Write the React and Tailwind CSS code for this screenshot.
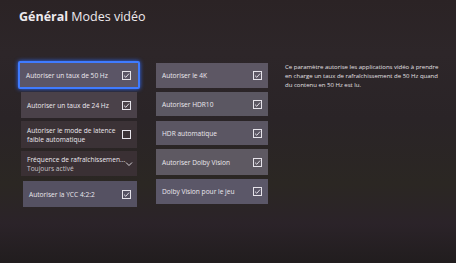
import React from "react";

const Check = ({ checked = true }) => (
  <div className="w-[9px] h-[9px] border border-[#e6e3ea] flex items-center justify-center shrink-0">
    {checked && (
      <svg width="7" height="7" viewBox="0 0 7 7" fill="none">
        <path d="M1 3.6 L2.8 5.3 L6 1.6" stroke="#ece9f0" strokeWidth="0.9" />
      </svg>
    )}
  </div>
);

const Tile = ({ label, h, bg, checked = true, className = "" }) => (
  <div
    className={`flex items-center justify-between pl-[6px] pr-[6px] ${className}`}
    style={{ height: h, background: bg }}
  >
    <span className="text-[6.6px] leading-[9px] text-[#ebe8ee] whitespace-nowrap">{label}</span>
    <Check checked={checked} />
  </div>
);

export default function App() {
  return (
    <div
      className="w-[456px] h-[263px] overflow-hidden relative"
      style={{
        fontFamily: '"Open Sans", "Noto Sans", sans-serif',
        background:
          "linear-gradient(180deg, #2b2325 0%, #2d2629 20%, #2a2427 45%, #2b2723 70%, #2b2329 85%, #211d1e 100%)",
      }}
    >
      <div className="pl-[19px] pt-[9px] text-[12.5px] leading-[16px] text-[#eeeaee]">
        <span className="font-bold">Général</span> Modes vidéo
      </div>

      <div className="flex pt-[36px]">
        {/* left column */}
        <div className="ml-[21px] w-[116px] flex flex-col">
          <div className="-mx-[3px] h-[28px] rounded-[2px] border-2 border-[#3f7bff] shadow-[0_0_4px_#2f6bff] bg-[#5b5566] flex items-center justify-between pl-[6px] pr-[7px]">
            <span className="text-[6.6px] leading-[9px] text-[#ebe8ee] whitespace-nowrap">Autoriser un taux de 50 Hz</span>
            <Check />
          </div>
          <Tile label="Autoriser un taux de 24 Hz" h={26} bg="#4a4149" className="mt-[3px]" />
          <div
            className="mt-[3px] h-[27px] flex items-center justify-between pl-[6px] pr-[6px]"
            style={{ background: "#3b3236" }}
          >
            <span className="text-[6.6px] leading-[9px] text-[#ebe8ee] whitespace-nowrap">
              Autoriser le mode de latence
              <br />
              faible automatique
            </span>
            <Check checked={false} />
          </div>
          <div
            className="mt-[3px] h-[25px] flex items-center justify-between pl-[6px] pr-[5px]"
            style={{ background: "#3a3034" }}
          >
            <div className="flex flex-col whitespace-nowrap">
              <span className="text-[6.6px] leading-[9px] text-[#ebe8ee]">Fréquence de rafraîchissemen...</span>
              <span className="text-[6.6px] leading-[9px] text-[#c9c3c8]">Toujours activé</span>
            </div>
            <svg width="8" height="6" viewBox="0 0 8 6" fill="none" className="shrink-0">
              <path d="M1 1.5 L4 4.5 L7 1.5" stroke="#e6e3ea" strokeWidth="0.9" />
            </svg>
          </div>
          <Tile label="Autoriser la YCC 4:2:2" h={26} bg="#555162" className="mt-[5px] ml-[2px]" />
        </div>

        {/* middle column */}
        <div className="ml-[19px] mt-[2px] w-[112px] flex flex-col">
          <Tile label="Autoriser le 4K" h={25} bg="#5d5764" />
          <Tile label="Autoriser HDR10" h={24} bg="#5b5762" className="mt-[4px]" />
          <Tile label="HDR automatique" h={24} bg="#5b5663" className="mt-[5px]" />
          <Tile label="Autoriser Dolby Vision" h={26} bg="#5e5962" className="mt-[4px]" />
          <Tile label="Dolby Vision pour le jeu" h={25} bg="#5b5768" className="mt-[4px]" />
        </div>

        {/* description */}
        <div className="ml-[17px] mt-[2px] text-[6px] leading-[9px] text-[#e4e0e4] whitespace-nowrap">
          Ce paramètre autorise les applications vidéo à prendre
          <br />
          en charge un taux de rafraîchissement de 50 Hz quand
          <br />
          du contenu en 50 Hz est lu.
        </div>
      </div>
    </div>
  );
}
